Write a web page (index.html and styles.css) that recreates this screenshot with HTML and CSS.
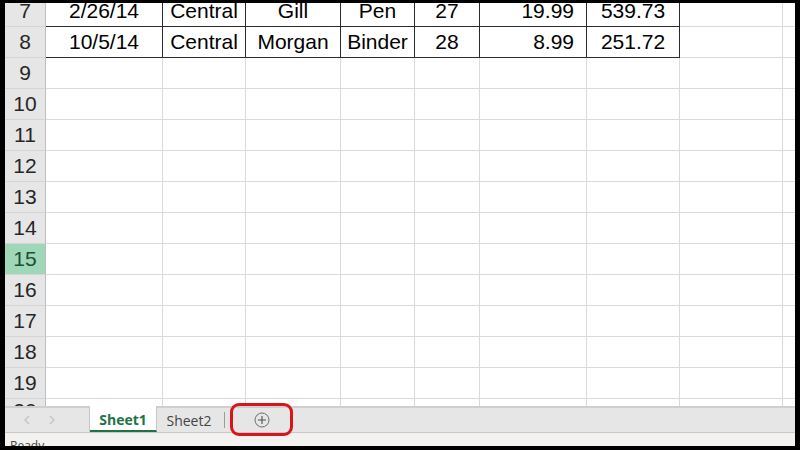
FILE: index.html
```html
<!DOCTYPE html>
<html>

<head>
    <title>Book1 - Excel</title>
    <link rel="stylesheet" href="styles.css">
</head>

<body>
    <div class="window">
        <div class="sheet">
            <div class="rows">
                <div class="row first">
                    <div class="head">7</div>
                    <div class="cell data center">2/26/14</div>
                    <div class="cell data center">Central</div>
                    <div class="cell data center">Gill</div>
                    <div class="cell data center">Pen</div>
                    <div class="cell data center">27</div>
                    <div class="cell data right">19.99</div>
                    <div class="cell data center">539.73</div>
                    <div class="cell"></div>
                    <div class="cell"></div>
                </div>
                <div class="row">
                    <div class="head">8</div>
                    <div class="cell data center">10/5/14</div>
                    <div class="cell data center">Central</div>
                    <div class="cell data center">Morgan</div>
                    <div class="cell data center">Binder</div>
                    <div class="cell data center">28</div>
                    <div class="cell data right">8.99</div>
                    <div class="cell data center">251.72</div>
                    <div class="cell"></div>
                    <div class="cell"></div>
                </div>
                <div class="row"><div class="head">9</div><div class="cell"></div><div class="cell"></div><div class="cell"></div><div class="cell"></div><div class="cell"></div><div class="cell"></div><div class="cell"></div><div class="cell"></div><div class="cell"></div></div>
                <div class="row"><div class="head">10</div><div class="cell"></div><div class="cell"></div><div class="cell"></div><div class="cell"></div><div class="cell"></div><div class="cell"></div><div class="cell"></div><div class="cell"></div><div class="cell"></div></div>
                <div class="row"><div class="head">11</div><div class="cell"></div><div class="cell"></div><div class="cell"></div><div class="cell"></div><div class="cell"></div><div class="cell"></div><div class="cell"></div><div class="cell"></div><div class="cell"></div></div>
                <div class="row"><div class="head">12</div><div class="cell"></div><div class="cell"></div><div class="cell"></div><div class="cell"></div><div class="cell"></div><div class="cell"></div><div class="cell"></div><div class="cell"></div><div class="cell"></div></div>
                <div class="row"><div class="head">13</div><div class="cell"></div><div class="cell"></div><div class="cell"></div><div class="cell"></div><div class="cell"></div><div class="cell"></div><div class="cell"></div><div class="cell"></div><div class="cell"></div></div>
                <div class="row"><div class="head">14</div><div class="cell"></div><div class="cell"></div><div class="cell"></div><div class="cell"></div><div class="cell"></div><div class="cell"></div><div class="cell"></div><div class="cell"></div><div class="cell"></div></div>
                <div class="row"><div class="head selected">15</div><div class="cell"></div><div class="cell"></div><div class="cell"></div><div class="cell"></div><div class="cell"></div><div class="cell"></div><div class="cell"></div><div class="cell"></div><div class="cell"></div></div>
                <div class="row"><div class="head">16</div><div class="cell"></div><div class="cell"></div><div class="cell"></div><div class="cell"></div><div class="cell"></div><div class="cell"></div><div class="cell"></div><div class="cell"></div><div class="cell"></div></div>
                <div class="row"><div class="head">17</div><div class="cell"></div><div class="cell"></div><div class="cell"></div><div class="cell"></div><div class="cell"></div><div class="cell"></div><div class="cell"></div><div class="cell"></div><div class="cell"></div></div>
                <div class="row"><div class="head">18</div><div class="cell"></div><div class="cell"></div><div class="cell"></div><div class="cell"></div><div class="cell"></div><div class="cell"></div><div class="cell"></div><div class="cell"></div><div class="cell"></div></div>
                <div class="row"><div class="head">19</div><div class="cell"></div><div class="cell"></div><div class="cell"></div><div class="cell"></div><div class="cell"></div><div class="cell"></div><div class="cell"></div><div class="cell"></div><div class="cell"></div></div>
                <div class="row"><div class="head last">20</div><div class="cell"></div><div class="cell"></div><div class="cell"></div><div class="cell"></div><div class="cell"></div><div class="cell"></div><div class="cell"></div><div class="cell"></div><div class="cell"></div></div>
            </div>
        </div>

        <div class="tabbar">
            <div class="nav">
                <svg width="8" height="10" viewBox="0 0 8 10"><path d="M6 1 L2 5 L6 9" fill="none" stroke="#c4c4c4" stroke-width="1.4"/></svg>
                <svg width="8" height="10" viewBox="0 0 8 10"><path d="M2 1 L6 5 L2 9" fill="none" stroke="#c4c4c4" stroke-width="1.4"/></svg>
            </div>
            <div class="tab active">Sheet1</div>
            <div class="tab">Sheet2</div>
            <div class="sep"></div>
            <div class="add">
                <svg width="16" height="16" viewBox="0 0 16 16">
                    <circle cx="8" cy="8" r="7" fill="none" stroke="#6e6e6e" stroke-width="1"/>
                    <path d="M8 4 V12 M4 8 H12" stroke="#505050" stroke-width="1.1"/>
                </svg>
                <div class="highlight"></div>
            </div>
        </div>

        <div class="status">Ready</div>
    </div>
</body>

</html>
```

FILE: styles.css
```css
body {
    margin: 0;
    background-color: #000;
    font-family: 'Liberation Sans', Arial, sans-serif;
}

.window {
    width: 790px;
    height: 443px;
    margin: 3px 0 0 5px;
    background-color: #fff;
    display: flex;
    flex-direction: column;
    overflow: hidden;
}

.sheet {
    height: 403px;
    overflow: hidden;
    flex: none;
}

.rows {
    margin-top: -7px;
}

.row {
    display: grid;
    grid-template-columns: 41px 117px 83px 95px 74px 65px 107px 93px 103px 40px;
    height: 31px;
}

.head,
.cell {
    box-sizing: border-box;
    height: 31px;
    display: flex;
    align-items: center;
    font-size: 21px;
    color: #000;
}

.head {
    justify-content: center;
    background-color: #e6e6e6;
    color: #262626;
    border-right: 1px solid #bdbdbd;
    border-bottom: 1px solid #d5d5d5;
}

.head.selected {
    background-color: #a0d7b9;
    color: #1d4f33;
}

.head.last {
    align-items: flex-start;
}

.cell {
    border-right: 1px solid #dadada;
    border-bottom: 1px solid #dadada;
}

.cell.data {
    border-right-color: #2b2b2b;
    border-bottom-color: #2b2b2b;
}

.center {
    justify-content: center;
}

.right {
    justify-content: flex-end;
    padding-right: 12px;
}

.tabbar {
    flex: none;
    height: 24px;
    display: flex;
    align-items: stretch;
    background-color: #e6e6e6;
    border-top: 2px solid #cfcfcf;
    border-bottom: 1px solid #c8c8c8;
    font-family: 'Open Sans', 'Noto Sans', sans-serif;
    font-size: 14px;
}

.nav {
    width: 85px;
    display: flex;
    align-items: center;
    gap: 17px;
    padding-left: 18px;
    box-sizing: border-box;
    border-right: 1px solid #c6c6c6;
}

.tab {
    width: 64px;
    display: flex;
    align-items: center;
    justify-content: center;
    color: #444;
}

.tab.active {
    width: 67px;
    margin-top: -2px;
    background-color: #fff;
    color: #217346;
    font-weight: bold;
    border-right: 1px solid #c6c6c6;
    border-bottom: 2px solid #217346;
    box-sizing: border-box;
    padding-top: 2px;
}

.sep {
    width: 1px;
    margin: 4px 0 4px 3px;
    background-color: #9a9a9a;
}

.add {
    position: relative;
    width: 63px;
    margin-left: 5px;
    display: flex;
    align-items: center;
    justify-content: center;
}

.highlight {
    position: absolute;
    left: 0;
    right: 0;
    top: -5px;
    bottom: -4px;
    border: 3px solid #d9141b;
    border-radius: 9px;
}

.status {
    flex: 1;
    background-color: #f3f2f1;
    font-family: 'Open Sans', 'Noto Sans', sans-serif;
    font-size: 12px;
    color: #444;
    padding: 5px 0 0 5px;
    line-height: 16px;
}
```
